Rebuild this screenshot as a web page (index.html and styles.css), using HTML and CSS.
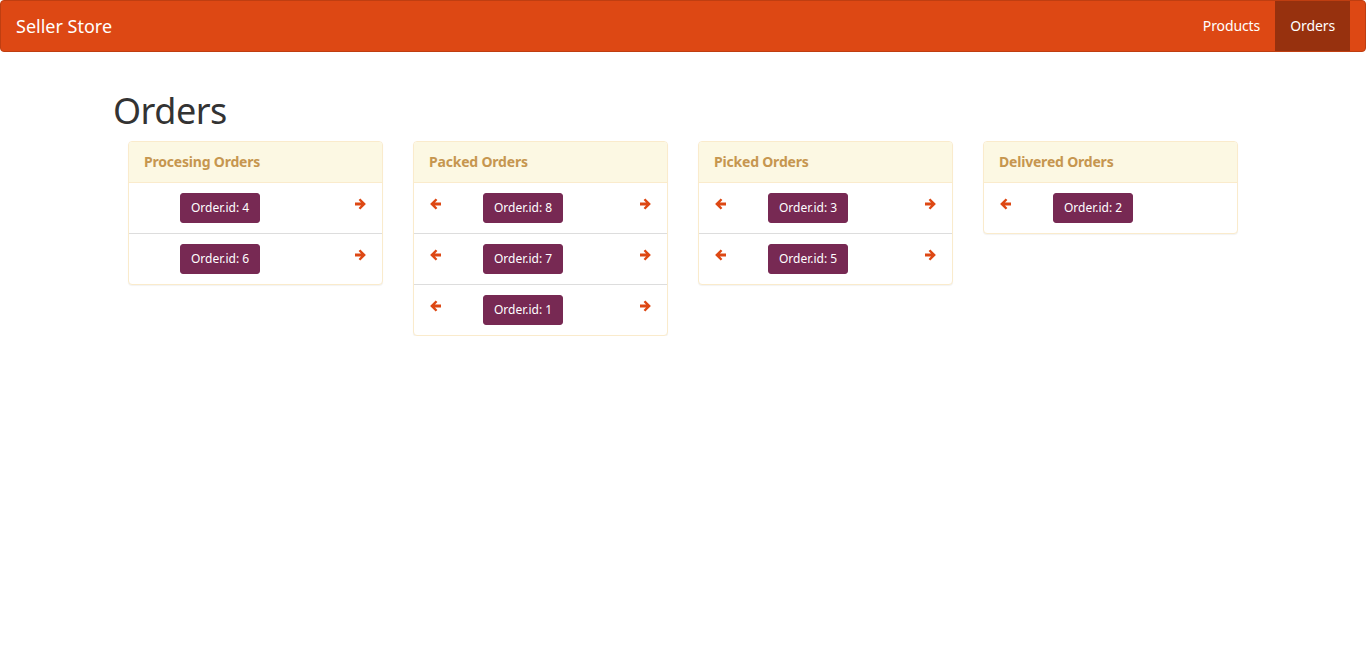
FILE: index.html
```html
<!DOCTYPE html>
<html>
<head>
<meta charset="utf-8">
<title>Seller Store</title>
<link rel="stylesheet" href="styles.css">
</head>
<body>
<nav class="navbar">
  <a class="brand">Seller Store</a>
  <ul class="nav">
    <li><a>Products</a></li>
    <li class="active"><a>Orders</a></li>
  </ul>
</nav>
<div class="container">
  <h1 class="title">Orders</h1>
  <div class="board">
    <div class="col">
      <div class="panel">
        <div class="panel-heading">Procesing Orders</div>
        <ul class="list">
          <li class="item"><span class="btn">Order.id: 4</span><svg class="arrow right" viewBox="0 0 12 12"><path d="M0 4.5h6L3.6 2.1 5.3 0.4 10.9 6 5.3 11.6 3.6 9.9 6 7.5H0z"/></svg></li>
          <li class="item"><span class="btn">Order.id: 6</span><svg class="arrow right" viewBox="0 0 12 12"><path d="M0 4.5h6L3.6 2.1 5.3 0.4 10.9 6 5.3 11.6 3.6 9.9 6 7.5H0z"/></svg></li>
        </ul>
      </div>
    </div>
    <div class="col">
      <div class="panel">
        <div class="panel-heading">Packed Orders</div>
        <ul class="list">
          <li class="item"><svg class="arrow left" viewBox="0 0 12 12"><path d="M12 4.5H6L8.4 2.1 6.7 0.4 1.1 6 6.7 11.6 8.4 9.9 6 7.5H12z"/></svg><span class="btn">Order.id: 8</span><svg class="arrow right" viewBox="0 0 12 12"><path d="M0 4.5h6L3.6 2.1 5.3 0.4 10.9 6 5.3 11.6 3.6 9.9 6 7.5H0z"/></svg></li>
          <li class="item"><svg class="arrow left" viewBox="0 0 12 12"><path d="M12 4.5H6L8.4 2.1 6.7 0.4 1.1 6 6.7 11.6 8.4 9.9 6 7.5H12z"/></svg><span class="btn">Order.id: 7</span><svg class="arrow right" viewBox="0 0 12 12"><path d="M0 4.5h6L3.6 2.1 5.3 0.4 10.9 6 5.3 11.6 3.6 9.9 6 7.5H0z"/></svg></li>
          <li class="item"><svg class="arrow left" viewBox="0 0 12 12"><path d="M12 4.5H6L8.4 2.1 6.7 0.4 1.1 6 6.7 11.6 8.4 9.9 6 7.5H12z"/></svg><span class="btn">Order.id: 1</span><svg class="arrow right" viewBox="0 0 12 12"><path d="M0 4.5h6L3.6 2.1 5.3 0.4 10.9 6 5.3 11.6 3.6 9.9 6 7.5H0z"/></svg></li>
        </ul>
      </div>
    </div>
    <div class="col">
      <div class="panel">
        <div class="panel-heading">Picked Orders</div>
        <ul class="list">
          <li class="item"><svg class="arrow left" viewBox="0 0 12 12"><path d="M12 4.5H6L8.4 2.1 6.7 0.4 1.1 6 6.7 11.6 8.4 9.9 6 7.5H12z"/></svg><span class="btn">Order.id: 3</span><svg class="arrow right" viewBox="0 0 12 12"><path d="M0 4.5h6L3.6 2.1 5.3 0.4 10.9 6 5.3 11.6 3.6 9.9 6 7.5H0z"/></svg></li>
          <li class="item"><svg class="arrow left" viewBox="0 0 12 12"><path d="M12 4.5H6L8.4 2.1 6.7 0.4 1.1 6 6.7 11.6 8.4 9.9 6 7.5H12z"/></svg><span class="btn">Order.id: 5</span><svg class="arrow right" viewBox="0 0 12 12"><path d="M0 4.5h6L3.6 2.1 5.3 0.4 10.9 6 5.3 11.6 3.6 9.9 6 7.5H0z"/></svg></li>
        </ul>
      </div>
    </div>
    <div class="col">
      <div class="panel">
        <div class="panel-heading">Delivered Orders</div>
        <ul class="list">
          <li class="item"><svg class="arrow left" viewBox="0 0 12 12"><path d="M12 4.5H6L8.4 2.1 6.7 0.4 1.1 6 6.7 11.6 8.4 9.9 6 7.5H12z"/></svg><span class="btn">Order.id: 2</span></li>
        </ul>
      </div>
    </div>
  </div>
</div>
</body>
</html>
```
FILE: styles.css
```css
* { box-sizing: border-box; }
body {
  margin: 0;
  font-family: "Noto Sans", "Open Sans", sans-serif;
  font-size: 14px;
  line-height: 20px;
  color: #333;
  background: #fff;
}
.navbar {
  display: flex;
  justify-content: space-between;
  height: 52px;
  background: #dd4814;
  border: 1px solid #bf3e11;
  border-radius: 4px;
  padding-right: 15px;
}
.brand {
  display: block;
  padding: 15px;
  font-size: 18px;
  line-height: 20px;
  color: #fff;
}
.nav {
  display: flex;
  list-style: none;
  margin: 0;
  padding: 0;
}
.nav a {
  display: block;
  padding: 15px;
  line-height: 20px;
  color: #fff;
  letter-spacing: -0.1px;
}
.nav .active a { background: #97310e; }
.container {
  width: 1140px;
  margin: 0 auto;
}
.title {
  font-size: 36px;
  font-weight: 400;
  line-height: 40px;
  margin: 39px 0 10px;
  letter-spacing: -0.5px;
}
.board {
  display: grid;
  grid-template-columns: repeat(4, 285px);
  align-items: start;
}
.col { padding: 0 15px; }
.panel {
  border: 1px solid #faebcc;
  border-radius: 4px;
  box-shadow: 0 1px 1px rgba(0,0,0,0.05);
  background: #fff;
  overflow: hidden;
}
.panel-heading {
  background: #fcf8e3;
  color: #c6964f;
  font-weight: 700;
  padding: 10px 15px;
  border-bottom: 1px solid #faebcc;
  font-size: 14px;
  line-height: 20px;
  letter-spacing: -0.2px;
}
.list { list-style: none; margin: 0; padding: 0; }
.item {
  display: flex;
  align-items: flex-start;
  height: 51px;
  padding: 10px 15px;
  border-top: 1px solid #ddd;
}
.item:first-child { height: 50px; border-top: 0; }
.arrow {
  width: 12px;
  height: 12px;
  margin-top: 5px;
  fill: #dd4814;
  flex: none;
}
.arrow.left { margin-right: 6px; }
.arrow.right { margin-left: auto; }
.btn {
  display: inline-block;
  margin-left: 36px;
  background: #772953;
  color: #fff;
  font-size: 12px;
  line-height: 18px;
  padding: 5px 10px;
  border: 1px solid #772953;
  border-radius: 3px;
}
```
